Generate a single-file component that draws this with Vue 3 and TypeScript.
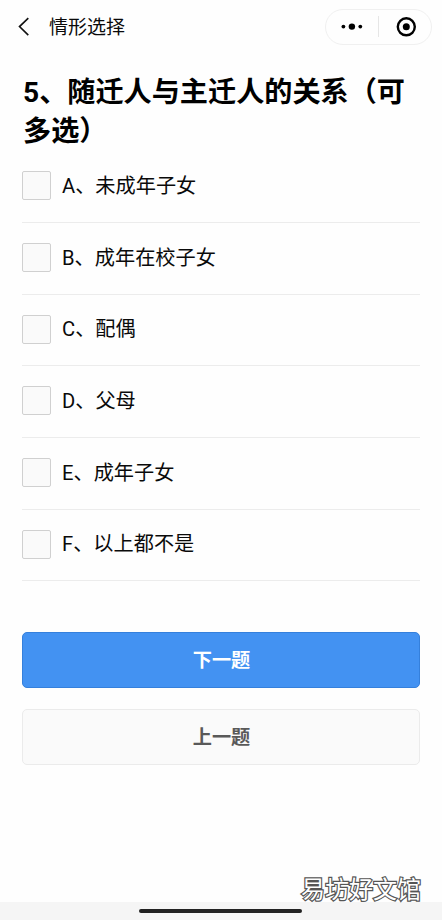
<script setup lang="ts">
import { ref } from 'vue'

interface Option {
  key: string
  label: string
}

const options: Option[] = [
  { key: 'A', label: '未成年子女' },
  { key: 'B', label: '成年在校子女' },
  { key: 'C', label: '配偶' },
  { key: 'D', label: '父母' },
  { key: 'E', label: '成年子女' },
  { key: 'F', label: '以上都不是' },
]

const selected = ref<string[]>([])
</script>

<template>
  <div class="screen">
    <header class="nav">
      <svg class="back" width="12" height="20" viewBox="0 0 12 20">
        <path d="M10.3 1.1 1.5 9.6l8.8 8.5" fill="none" stroke="#111" stroke-width="1.6" />
      </svg>
      <span class="nav-title">情形选择</span>
      <div class="capsule">
        <svg class="dots" width="22" height="8" viewBox="0 0 22 8">
          <circle cx="2.4" cy="3.6" r="1.9" />
          <circle cx="10.9" cy="3.6" r="3.2" />
          <circle cx="19.3" cy="3.6" r="1.9" />
        </svg>
        <span class="split"></span>
        <svg class="target" width="20" height="20" viewBox="0 0 20 20">
          <circle cx="10.3" cy="9.8" r="8.5" fill="none" stroke="#000" stroke-width="2.4" />
          <circle cx="10.3" cy="9.8" r="3.5" />
        </svg>
      </div>
    </header>

    <main class="content">
      <h1 class="question">5、随迁人与主迁人的关系（可多选）</h1>
      <div class="options">
        <label v-for="option in options" :key="option.key" class="option">
          <input v-model="selected" class="box" type="checkbox" :value="option.key" />
          <span class="text">{{ option.key }}、{{ option.label }}</span>
        </label>
      </div>
      <div class="actions">
        <button class="btn primary" type="button">下一题</button>
        <button class="btn plain" type="button">上一题</button>
      </div>
    </main>

    <footer class="home">
      <span class="home-bar"></span>
    </footer>
    <span class="watermark">易坊好文馆</span>
  </div>
</template>

<style>
body {
  background: #fff;
}
</style>

<style scoped>
.screen {
  position: relative;
  display: flex;
  flex-direction: column;
  width: 442px;
  height: 920px;
  color: #0a0a0a;
  background: #fefefe;
  font-family: Roboto, 'Noto Sans CJK SC', sans-serif;
}
.nav {
  display: flex;
  align-items: center;
  flex: none;
  box-sizing: border-box;
  height: 53px;
  padding: 0 10px 0 18px;
}
.nav-title {
  padding-top: 2px;
  margin-left: 19px;
  font-size: 19px;
  line-height: 28px;
}
.capsule {
  display: flex;
  align-items: center;
  box-sizing: border-box;
  width: 107px;
  height: 36px;
  margin-left: auto;
  padding-left: 15px;
  border: 1px solid #f0f0f0;
  border-radius: 18px;
}
.split {
  width: 1px;
  height: 21px;
  margin-left: 15px;
  background: #e6e6e6;
}
.target {
  margin-left: 17px;
}
.content {
  flex: 1;
  padding: 20px 22px 0;
}
.question {
  margin: 0;
  padding: 0 0 0.45px 1px;
  color: #000;
  font-size: 28.15px;
  font-weight: 700;
  line-height: 39px;
}
.option {
  display: flex;
  align-items: center;
  box-sizing: border-box;
  height: 71.65px;
  padding-bottom: 1.6px;
  border-bottom: 1px solid #ececec;
}
.box {
  appearance: none;
  box-sizing: border-box;
  width: 29px;
  height: 29px;
  margin: 0;
  border: 1px solid #d0d0d0;
  border-radius: 2px;
  background: #fafafa;
}
.text {
  margin-left: 11px;
  font-size: 20.2px;
  line-height: 28px;
}
.actions {
  display: flex;
  flex-direction: column;
  gap: 21px;
  padding-top: 50.6px;
}
.btn {
  box-sizing: border-box;
  height: 56px;
  padding: 0 0 2px 1px;
  border: 1px solid;
  border-radius: 5px;
  font-family: inherit;
  font-size: 19.2px;
  font-weight: 700;
}
.primary {
  color: #fff;
  border-color: #3580dc;
  background: #4392f2;
}
.plain {
  color: #595959;
  border-color: #ebebeb;
  background: #fafafa;
}
.home {
  display: flex;
  justify-content: center;
  flex: none;
  box-sizing: border-box;
  height: 18px;
  padding: 7px 1px 0 0;
  background: #f5f5f5;
}
.home-bar {
  width: 163px;
  height: 4px;
  border-radius: 2px;
  background: #222;
}
.watermark {
  position: absolute;
  right: 21px;
  bottom: 12px;
  color: #fff;
  font-size: 24px;
  line-height: 36px;
  white-space: nowrap;
  -webkit-text-stroke: 2.4px #555;
  paint-order: stroke fill;
}
</style>
